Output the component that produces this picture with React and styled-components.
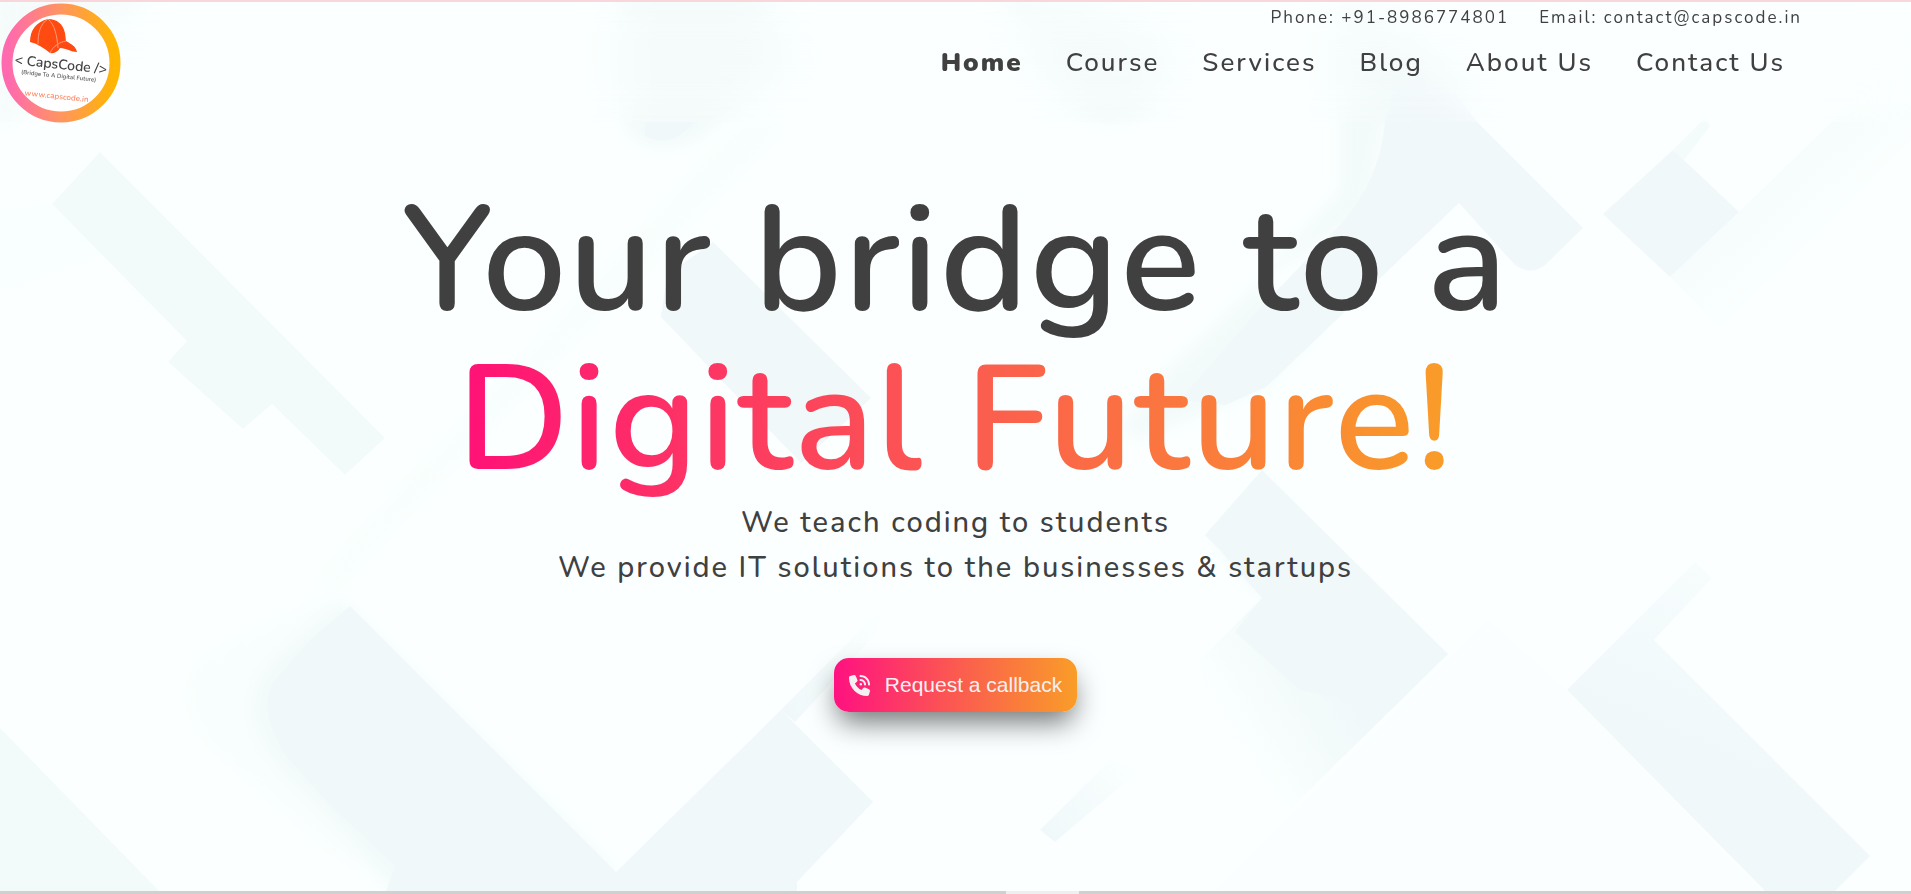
import React from "react";
import styled, { createGlobalStyle } from "styled-components";
import { FaPhoneVolume } from "react-icons/fa6";

const GlobalStyle = createGlobalStyle`
  *, *::before, *::after { box-sizing: border-box; }
  body {
    margin: 0;
    background: #fbffff;
    color: #404040;
    font-family: Nunito, Lato, "Open Sans", sans-serif;
  }
`;

const Page = styled.div`
  position: relative;
  min-height: 100vh;
  display: flex;
  flex-direction: column;
  overflow: hidden;
`;

const Backdrop = styled.svg`
  position: absolute;
  inset: 0;
  width: 100%;
  height: 100%;
  z-index: -1;
`;

const Header = styled.header`
  display: flex;
  justify-content: space-between;
  align-items: flex-start;
  height: 122px;
  border-top: 2px solid #f8d7da;
  background: rgba(252, 255, 255, 0.1);
  backdrop-filter: blur(24px);
`;

const LogoLink = styled.a`
  display: block;
  line-height: 0;
`;

const LogoImage = styled.svg`
  width: 122px;
  height: 122px;
  font-family: Nunito, Lato, sans-serif;
`;

const HeaderRight = styled.div`
  display: flex;
  flex-direction: column;
  align-items: flex-end;
  padding-right: 109px;
`;

const ContactRow = styled.div`
  display: flex;
  gap: 30px;
  font-size: 17px;
  line-height: 32px;
  letter-spacing: 2px;
`;

const ContactText = styled.span`
  white-space: nowrap;
`;

const Nav = styled.nav`
  display: flex;
  gap: 43px;
  padding: 11px 17px 0 0;
`;

const NavLink = styled.a`
  color: inherit;
  text-decoration: none;
  white-space: nowrap;
  font-size: 26px;
  line-height: 36px;
  letter-spacing: 2px;
  font-weight: ${(p) => (p.$active ? 900 : 500)};
`;

const Hero = styled.main`
  flex: 1;
  display: flex;
  flex-direction: column;
  align-items: center;
  padding: 60px 24px 0;
  text-align: center;
`;

const Title = styled.h1`
  margin: 0;
  font-size: 149px;
  line-height: 159px;
  font-weight: 600;
  letter-spacing: 2px;
`;

const TitleLine = styled.span`
  display: block;
`;

const GradientLine = styled.span`
  display: table;
  margin: 0 auto;
  color: transparent;
  background: linear-gradient(to right, #ff1177, #fb5a50 50%, #f99d28);
  background-clip: text;
  -webkit-background-clip: text;
`;

const Tagline = styled.p`
  margin: 0;
  font-size: 29px;
  font-weight: 500;
  line-height: 45px;
  letter-spacing: 2px;
`;

const CallbackButton = styled.button`
  display: flex;
  align-items: center;
  gap: 15px;
  height: 54px;
  margin-top: 68px;
  padding: 0 15px;
  border: 0;
  border-radius: 15px;
  color: #f5f1f2;
  background: linear-gradient(to right, #ff1180, #fb5a50 50%, #f99d28);
  box-shadow: 0 14px 28px -4px rgba(0, 0, 0, 0.55);
  font-family: Arial, "Liberation Sans", sans-serif;
  font-size: 21px;
  cursor: pointer;
`;

const NextSection = styled.div`
  display: flex;
  justify-content: center;
  height: 3px;
  background: #d0d0d0;
`;

const NextMarker = styled.div`
  width: 73px;
  margin-left: 174px;
  background: #efefef;
`;

function Logo() {
  return (
    <LogoImage viewBox="0 0 122 122" role="img" aria-label="CapsCode">
      <defs>
        <linearGradient id="ring" x1="0" y1="0" x2="1" y2="0">
          <stop offset="0" stopColor="#ff69b0" />
          <stop offset="0.5" stopColor="#ff9560" />
          <stop offset="1" stopColor="#ffb600" />
        </linearGradient>
      </defs>
      <circle cx="61" cy="61" r="54" fill="#fff" stroke="url(#ring)" strokeWidth="11" />
      <path
        d="M30 40 C30 28 36 20 48 17 C57 17 63 22 65 31 L66 39 C71 42 76 44 77 50 C71 50 66 46 60 46 C58 50 53 52 50 51 C44 46 38 42 30 40 Z"
        fill="#ff4a12"
      />
      <path d="M48 17 C40 22 38 31 38 42 M48 17 C55 23 57 34 58 46 M50 51 C53 44 60 40 66 39" fill="none" stroke="#ff9a78" strokeWidth="1" />
      <g transform="rotate(6 61 61)" textAnchor="middle" fill="#444">
        <text x="61" y="67" fontSize="14" fontWeight="600">{"< CapsCode />"}</text>
        <text x="60" y="76" fontSize="6" fontWeight="600" fill="#555">(Bridge To A Digital Future)</text>
        <text x="60" y="97" fontSize="8" fontWeight="600" fill="#ff8a66">www.capscode.in</text>
      </g>
    </LogoImage>
  );
}

function BackgroundArt() {
  return (
    <Backdrop viewBox="0 0 1911 894" preserveAspectRatio="xMidYMid slice" aria-hidden="true">
      <defs>
        <filter id="soft" x="-30%" y="-30%" width="160%" height="160%">
          <feGaussianBlur stdDeviation="8" />
        </filter>
        <linearGradient id="fadeUp" x1="0" y1="1" x2="1" y2="0">
          <stop offset="0" stopColor="#eff8f9" />
          <stop offset="1" stopColor="#fbffff" />
        </linearGradient>
        <linearGradient id="fadeDown" x1="0" y1="0" x2="1" y2="1">
          <stop offset="0" stopColor="#f1faf9" />
          <stop offset="0.7" stopColor="#fbffff" />
        </linearGradient>
        <linearGradient id="barFade" gradientUnits="userSpaceOnUse" x1="1700" y1="565" x2="1630" y2="720">
          <stop offset="0" stopColor="#f7fdfd" />
          <stop offset="1" stopColor="#f0f8fa" />
        </linearGradient>
        <linearGradient id="topLeftFade" gradientUnits="userSpaceOnUse" x1="52" y1="204" x2="100" y2="340">
          <stop offset="0" stopColor="#f9fefe" />
          <stop offset="1" stopColor="#fbffff" />
        </linearGradient>
        <linearGradient id="wedge" gradientUnits="userSpaceOnUse" x1="1340" y1="680" x2="1235" y2="745">
          <stop offset="0" stopColor="#f0f8fa" />
          <stop offset="0.35" stopColor="#f3fbfa" />
          <stop offset="1" stopColor="#fbffff" />
        </linearGradient>
      </defs>

      <path d="M0 210 L52 204 L187 341 L168 362 L36 482 L0 440 Z" fill="url(#topLeftFade)" />

      <g fill="#f8fefd">
        <path d="M335 592 L616 872 L400 894 L330 850 L215 750 Q170 705 200 660 Z" filter="url(#soft)" />
        <path d="M790 122 L440 480 L345 580 L335 592 L320 575 L740 122 Z" filter="url(#soft)" />
      </g>

      <g fill="#f3fbfa">
        <path d="M100 152 L385 438 L345 475 L272 404 L243 429 L168 362 L187 341 L52 204 Z" />
        <path d="M0 728 L162 894 L0 894 Z" />
        <path d="M340 602 L616 872 L400 894 L300 790 Q220 720 270 660 Z" filter="url(#soft)" />
        <path d="M620 0 L760 0 L790 60 L700 140 Q650 160 625 130 Z" filter="url(#soft)" />
        <path d="M1000 0 L1170 40 L1150 110 Q1110 135 1075 110 Z" filter="url(#soft)" />
        <path d="M0 0 L150 0 L40 90 L0 130 Z" filter="url(#soft)" />
        <path d="M1340 0 L1430 60 L1385 122 L1366 213 L1258 283 L1240 300 L1340 190 Z" filter="url(#soft)" />
        <path d="M1258 283 L1163 373 L1120 430 L1140 440 L1266 387 L1320 330 Z" filter="url(#soft)" />
        <path d="M1215 545 L1262 480 L1300 520 L1262 598 Z" filter="url(#soft)" />
      </g>

      <path d="M1448 654 L1291 808 L1205 720 L1200 660 L1262 598 Z" fill="url(#wedge)" />

      <g fill="#f0f8fa">
        <path d="M350 606 L616 872 L781 710 L873 802 L797 882 L797 894 L385 894 L395 866 L330 805 L285 755 Q255 705 275 680 L310 640 Z" />
        <path d="M713 242 L871 398 L801 463 L661 317 L667 275 Z" />
        <path d="M1385 122 L1400 60 L1430 60 L1477 122 L1583 228 L1545 265 Q1530 276 1515 265 L1459 203 L1266 387 L1225 405 L1180 400 L1258 310 L1340 225 Q1380 180 1385 122 Z" />
        <path d="M1673 150 L1739 212 L1670 277 L1603 214 Z" />
        <path d="M1262 470 L1448 654 L1390 709 L1300 690 L1235 632 L1262 598 L1220 550 L1205 535 Z" />
        <path d="M645 122 L695 122 Q670 150 645 136 Z" />
      </g>

      <path d="M1567 690 L1695 562 L1712 578 L1654 640 L1870 856 L1832 894 L1768 894 Z" fill="url(#barFade)" />
      <path d="M781 710 L885 605 L875 635 L795 722 Z" fill="url(#fadeUp)" />
      <path d="M1673 150 L1705 118 L1710 126 L1684 160 Z" fill="#f4fbfb" />
      <path d="M1739 212 L1850 104 L1911 104 L1911 140 L1720 328 L1670 277 Z" fill="url(#fadeDown)" />
      <path d="M1040 830 L1110 760 L1140 770 L1055 842 Z" fill="url(#fadeUp)" />
      <path d="M1488 620 L1567 690 L1765 894 L1212 894 Z" fill="#fafefe" />
    </Backdrop>
  );
}

const NAV_ITEMS = ["Home", "Course", "Services", "Blog", "About Us", "Contact Us"];

export default function App() {
  return (
    <>
      <GlobalStyle />
      <Page>
        <BackgroundArt />
        <Header>
          <LogoLink href="#home">
            <Logo />
          </LogoLink>
          <HeaderRight>
            <ContactRow>
              <ContactText>Phone: +91-8986774801</ContactText>
              <ContactText>Email: contact@capscode.in</ContactText>
            </ContactRow>
            <Nav>
              {NAV_ITEMS.map((item, i) => (
                <NavLink key={item} href="#" $active={i === 0}>
                  {item}
                </NavLink>
              ))}
            </Nav>
          </HeaderRight>
        </Header>
        <Hero>
          <Title>
            <TitleLine>Your bridge to a</TitleLine>
            <GradientLine>Digital Future!</GradientLine>
          </Title>
          <Tagline>We teach coding to students</Tagline>
          <Tagline>We provide IT solutions to the businesses &amp; startups</Tagline>
          <CallbackButton type="button">
            <FaPhoneVolume size={21} />
            Request a callback
          </CallbackButton>
        </Hero>
        <NextSection>
          <NextMarker />
        </NextSection>
      </Page>
    </>
  );
}
